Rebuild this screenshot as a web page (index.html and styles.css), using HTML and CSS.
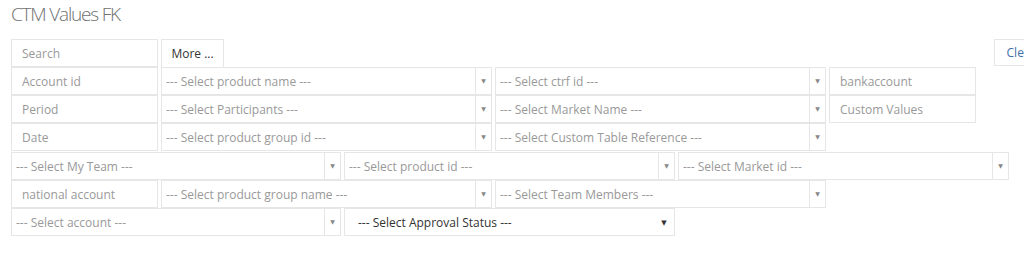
FILE: index.html
```html
<!DOCTYPE html>
<html lang="en">
<head>
    <meta charset="UTF-8">
    <title>CTM Values FK</title>
    <link rel="stylesheet" href="styles.css">
</head>
<body>
    <div class="page">
        <h1 class="page-title">CTM Values FK</h1>

        <!-- toolbar: search, more, clear -->
        <div class="row toolbar">
            <div class="field small"><span class="placeholder">Search</span></div>
            <button class="btn more">More ...</button>
            <button class="btn clear">Clear</button>
        </div>

        <div class="filters">
            <div class="row">
                <div class="field small"><span class="placeholder">Account id</span></div>
                <div class="select wide"><span class="placeholder">--- Select product name ---</span><span class="arrow">&#9660;</span></div>
                <div class="select wide"><span class="placeholder">--- Select ctrf id ---</span><span class="arrow">&#9660;</span></div>
                <div class="field small"><span class="placeholder">bankaccount</span></div>
            </div>
            <div class="row">
                <div class="field small"><span class="placeholder">Period</span></div>
                <div class="select wide"><span class="placeholder">--- Select Participants ---</span><span class="arrow">&#9660;</span></div>
                <div class="select wide"><span class="placeholder">--- Select Market Name ---</span><span class="arrow">&#9660;</span></div>
                <div class="field small"><span class="placeholder">Custom Values</span></div>
            </div>
            <div class="row">
                <div class="field small"><span class="placeholder">Date</span></div>
                <div class="select wide"><span class="placeholder">--- Select product group id ---</span><span class="arrow">&#9660;</span></div>
                <div class="select wide"><span class="placeholder">--- Select Custom Table Reference ---</span><span class="arrow">&#9660;</span></div>
            </div>
            <div class="row row-third">
                <div class="select third first"><span class="placeholder">--- Select My Team ---</span><span class="arrow">&#9660;</span></div>
                <div class="select wide"><span class="placeholder">--- Select product id ---</span><span class="arrow">&#9660;</span></div>
                <div class="select wide"><span class="placeholder">--- Select Market id ---</span><span class="arrow">&#9660;</span></div>
            </div>
            <div class="row">
                <div class="field small"><span class="placeholder">national account</span></div>
                <div class="select wide"><span class="placeholder">--- Select product group name ---</span><span class="arrow">&#9660;</span></div>
                <div class="select wide"><span class="placeholder">--- Select Team Members ---</span><span class="arrow">&#9660;</span></div>
            </div>
            <div class="row">
                <div class="select third first"><span class="placeholder">--- Select account ---</span><span class="arrow">&#9660;</span></div>
                <div class="select wide native"><span class="value">--- Select Approval Status ---</span><span class="arrow">&#9660;</span></div>
            </div>
        </div>
    </div>
</body>
</html>
```

FILE: styles.css
```css
html, body {
    margin: 0;
    padding: 0;
    background: #fff;
    overflow: hidden;
}

body {
    font-family: 'Open Sans', 'DejaVu Sans', sans-serif;
    font-size: 12px;
    color: #333;
}

.page {
    padding: 0 11px;
}

.page-title {
    margin: 0;
    padding-top: 1px;
    height: 38px;
    font-size: 19px;
    line-height: 26px;
    font-weight: 300;
    letter-spacing: -1.2px;
    color: #707070;
}

.row {
    display: flex;
    gap: 3px;
    height: 28px;
}

.row-third {
    margin-top: 1px;
}

.toolbar {
    width: 1037px;
}

/* text-box look */
.field,
.select {
    box-sizing: border-box;
    height: 28px;
    border: 1px solid #e6e6e6;
    background: #fff;
    display: flex;
    align-items: center;
}

.field {
    padding-left: 10px;
}

.small {
    width: 147px;
}

.wide {
    width: 331px;
}

.third {
    width: 330px;
}

.placeholder {
    color: #999;
    white-space: nowrap;
}

.select {
    padding-left: 4px;
}

.select .placeholder {
    flex: 1;
    overflow: hidden;
}

.select .arrow {
    box-sizing: border-box;
    width: 16px;
    height: 100%;
    border-left: 1px solid #e6e6e6;
    display: flex;
    align-items: center;
    justify-content: center;
    font-size: 6px;
    color: #888;
}

/* plain browser select */
.select.native {
    padding-left: 13px;
}

.select.native .value {
    flex: 1;
    color: #333;
    white-space: nowrap;
}

.select.native .arrow {
    border-left: none;
    width: 20px;
    font-size: 7px;
    color: #333;
}

.btn {
    box-sizing: border-box;
    height: 28px;
    border: 1px solid #e6e6e6;
    background: #fff;
    font-family: 'Open Sans', 'DejaVu Sans', sans-serif;
    font-size: 12px;
    padding: 0;
    white-space: nowrap;
    text-align: center;
    cursor: pointer;
}

.more {
    width: 63px;
    height: 29px;
    color: #333;
}

.clear {
    margin-left: auto;
    width: 54px;
    height: 27px;
    color: #3f6fa8;
}
```
